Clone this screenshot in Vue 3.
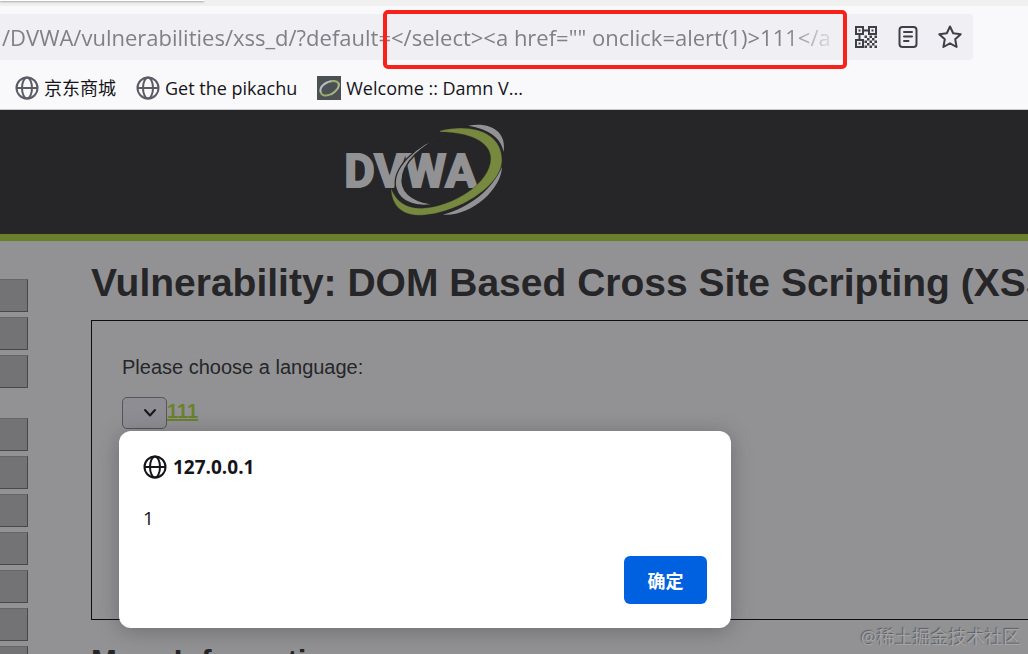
<template>
  <div class="window">
    <div class="tabs"><div class="tab"></div></div>

    <!-- address bar -->
    <div class="toolbar">
      <div class="urlbar">
        <input class="url" type="text" aria-label="Address" v-model="url" spellcheck="false">
        <button class="tool" type="button" aria-label="QR code">
          <svg width="22" height="22" viewBox="0 0 22 22" fill="#3f3f47">
            <path fill-rule="evenodd" d="M0 0h9v9H0zM2 2v5h5V2zM13 0h9v9h-9zM15 2v5h5V2zM0 13h9v9H0zM2 15v5h5v-5z" />
            <path d="M3.500 3.500h2v2h-2zM16.500 3.500h2v2h-2zM3.500 16.500h2v2h-2zM9 3.500h4v2H9zM3.500 9h2v4h-2z" />
            <path d="M9.500 9.500h2.500v2.500h-2.500zM14.500 9.500h2.500v2.500h-2.500zM19.500 9.500h2.500v2.500h-2.500zM12 12h2.500v2.500h-2.500zM17 12h2.500v2.500h-2.500zM9.500 14.500h2.500v2.500h-2.500zM14.500 14.500h2.500v2.500h-2.500zM19.500 14.500h2.500v2.500h-2.500zM12 17h2.500v2.500h-2.500zM17 17h2.500v2.500h-2.500zM9.500 19.500h2.500v2.500h-2.500zM14.500 19.500h2.500v2.500h-2.500zM19.500 19.500h2.500v2.500h-2.500z" />
          </svg>
        </button>
        <button class="tool" type="button" aria-label="Reader view">
          <svg width="22" height="22" viewBox="0 0 22 22" fill="none" stroke="#3f3f47" stroke-width="2" stroke-linecap="round">
            <rect x="2.500" y="1" width="17" height="20" rx="3" />
            <path d="M7 6H15M7 10.500H15M7 15H11.500" />
          </svg>
        </button>
        <button class="tool" type="button" aria-label="Bookmark this page">
          <svg width="24" height="24" viewBox="0 0 24 24" fill="none" stroke="#3f3f47" stroke-width="2" stroke-linejoin="round">
            <path d="M12 1.500L15.200 8.300L22.700 9.200L17.200 14.300L18.600 22L12 18.300L5.400 22L6.800 14.300L1.300 9.200L8.800 8.300Z" />
          </svg>
        </button>
      </div>
      <div class="marker"></div>
    </div>

    <nav class="bookmarks">
      <a v-for="item in bookmarks" :key="item.name" class="bookmark" href="#">
        <svg v-if="item.globe" width="24" height="24" viewBox="0 0 24 24" fill="none" stroke="#5b5b66" stroke-width="2">
          <circle cx="12" cy="12" r="10.500" />
          <ellipse cx="12" cy="12" rx="5" ry="10.500" />
          <path d="M1.500 12H22.500" />
        </svg>
        <svg v-else width="24" height="24" viewBox="0 0 24 24" fill="none">
          <rect width="24" height="24" fill="#4b5054" />
          <path d="M4 17C1 11 10 4 18 5" stroke="#b9bcbe" stroke-width="2" />
          <path d="M14 5C25 4 23 12 16 17C10 21 4 20 4 16" stroke="#9aab6d" stroke-width="2" />
          <path d="M22 7C23 12 19 16 14 19" stroke="#b9bcbe" />
        </svg>
        <span>{{ item.name }}</span>
      </a>
    </nav>

    <!-- dimmed page -->
    <div class="page">
      <header class="header">
        <svg class="logo" width="190" height="124" viewBox="0 0 570 372" role="img" aria-label="DVWA">
          <text x="43" y="230" class="logo-text">DVWA</text>
          <path d="M352 73C250 105 186 178 197 232C210 284 270 292 318 282C262 280 218 255 216 214C216 158 274 105 352 73Z" fill="#929295" stroke="#262628" stroke-width="4" />
          <path d="M330 62C430 38 516 70 516 150C516 232 370 316 265 316C205 314 184 276 183 234C198 274 225 294 275 295C370 290 482 220 482 145C482 92 410 66 330 66Z" fill="#77893f" stroke="#262628" stroke-width="1" />
          <path d="M415 47C486 35 530 68 521 126C513 82 476 58 415 47Z" fill="#929295" />
          <path d="M516 170C514 240 420 321 338 314C420 292 490 235 516 170Z" fill="#929295" />
        </svg>
      </header>

      <div class="content">
        <ul class="menu">
          <li v-for="n in 10" :key="n" :class="{ last: n === 3 }"></li>
        </ul>
        <main class="main">
          <h1>Vulnerability: DOM Based Cross Site Scripting (XSS)</h1>
          <div class="box">
            <form @submit.prevent>
              <label for="language">Please choose a language:</label>
              <div class="choice">
                <span class="picker">
                  <select id="language" name="default"><option></option></select>
                  <svg width="14" height="10" viewBox="0 0 14 10" fill="none" stroke="#17171c" stroke-width="2" stroke-linecap="round" stroke-linejoin="round">
                    <path d="M2 2L7 7.500L12 2" />
                  </svg>
                </span>
                <a href="" @click.prevent="showAlert = true">111</a>
              </div>
            </form>
          </div>
          <h2>More Information</h2>
        </main>
      </div>

      <div v-if="showAlert" class="alert" role="alertdialog" aria-labelledby="host">
        <div class="host">
          <svg width="24" height="24" viewBox="0 0 24 24" fill="none" stroke="#15141a" stroke-width="2">
            <circle cx="12" cy="12" r="10.500" />
            <ellipse cx="12" cy="12" rx="5" ry="10.500" />
            <path d="M1.500 12H22.500" />
          </svg>
          <strong id="host">127.0.0.1</strong>
        </div>
        <p>1</p>
        <button type="button" @click="showAlert = false">确定</button>
      </div>
    </div>

    <div class="watermark">@稀土掘金技术社区</div>
  </div>
</template>

<script setup>
import { ref } from 'vue'

const url = ref('/DVWA/vulnerabilities/xss_d/?default=</select><a href="" onclick=alert(1)>111</a>')
const showAlert = ref(true)

const bookmarks = [
  { name: '京东商城', globe: true },
  { name: 'Get the pikachu', globe: true },
  { name: 'Welcome :: Damn V...', globe: false }
]
</script>

<style>
body {
  margin: 0;
}
</style>

<style scoped>
.window {
  position: relative;
  display: flex;
  flex-direction: column;
  height: 100vh;
  overflow: hidden;
  background: #f9f9fb;
  font-family: "Open Sans", "Noto Sans CJK SC", sans-serif;
}

.tabs {
  height: 6px;
  background: #f0f0f1;
}

.tab {
  width: 204px;
  height: 1px;
  background: #fff;
  border-radius: 0 0 4px 0;
  box-shadow: 0 1px 2px #8c8c8c;
}

.toolbar {
  position: relative;
  padding: 8px 55px 0 0;
}

.urlbar {
  display: flex;
  align-items: center;
  height: 46px;
  padding-right: 2px;
  background: #f0f0f4;
  border-radius: 0 4px 4px 0;
}

.url {
  flex: 0 1 845px;
  min-width: 0;
  box-sizing: border-box;
  height: 46px;
  padding: 0 14px 0 2px;
  border: 0;
  outline: 0;
  background: none;
  color: #808086;
  font-family: inherit;
  font-size: 22px;
  -webkit-mask-image: linear-gradient(to right, #000 calc(100% - 60px), transparent calc(100% - 5px));
  mask-image: linear-gradient(to right, #000 calc(100% - 60px), transparent calc(100% - 5px));
}

.tool {
  display: flex;
  flex: 1 0 42px;
  align-items: center;
  justify-content: center;
  height: 42px;
  padding: 0;
  border: 0;
  background: none;
}

/* red frame drawn over the payload */
.marker {
  position: absolute;
  left: 383px;
  top: 4px;
  box-sizing: border-box;
  width: 464px;
  height: 59px;
  border: 4px solid #f8221a;
  border-radius: 5px;
  pointer-events: none;
}

.bookmarks {
  display: flex;
  gap: 20px;
  align-items: center;
  box-sizing: border-box;
  height: 50px;
  padding: 6px 15px 0;
  border-bottom: 1px solid #c8c8cc;
}

.bookmark {
  display: flex;
  gap: 5px;
  align-items: center;
  color: #15141a;
  font-size: 18px;
  line-height: 28px;
  text-decoration: none;
  white-space: nowrap;
}

.page {
  position: relative;
  flex: 1;
  min-height: 0;
  background: #929295;
  font-family: "Liberation Sans", Arial, sans-serif;
}

.header {
  height: 124px;
  background: #262628;
  border-bottom: 7px solid #6b802d;
}

.logo {
  display: block;
  margin-left: 330px;
}

.logo-text {
  fill: #929295;
  stroke: #929295;
  stroke-width: 6px;
  font-family: Roboto, sans-serif;
  font-size: 141px;
  font-weight: bold;
}

.content {
  display: flex;
  gap: 63px;
}

.menu {
  flex: none;
  width: 28px;
  margin: 38px 0 0;
  padding: 0;
  list-style: none;
}

.menu li {
  box-sizing: border-box;
  height: 33px;
  margin-bottom: 5px;
  background: #737375;
  border-top: 1px solid #666668;
  border-right: 1px solid #48484a;
  border-bottom: 1px solid #48484a;
}

.menu li.last {
  margin-bottom: 30px;
}

.main {
  flex: 1;
  min-width: 0;
  color: #262628;
}

h1 {
  margin: 19px 0 15px;
  font-size: 39px;
  line-height: 45px;
  white-space: nowrap;
}

.box {
  box-sizing: border-box;
  height: 300px;
  padding: 32px 30px;
  border: 1px solid #0d0d0e;
  border-right: 0;
}

label {
  display: block;
  font-size: 20px;
  line-height: 28px;
}

.choice {
  display: flex;
  align-items: flex-start;
  margin-top: 16px;
}

.picker {
  position: relative;
  width: 45px;
  height: 32px;
}

select {
  appearance: none;
  box-sizing: border-box;
  width: 100%;
  height: 100%;
  border: 1px solid #55555a;
  border-radius: 5px;
  background: #8d8d93;
}

.picker svg {
  position: absolute;
  right: 10px;
  top: 11px;
  pointer-events: none;
}

.choice a {
  color: #6b802d;
  font-size: 20px;
  font-weight: bold;
  line-height: 28px;
}

h2 {
  margin: 24px 0 0;
  font-size: 31px;
  line-height: 36px;
}

.alert {
  position: absolute;
  left: 119px;
  top: 321px;
  display: flex;
  flex-direction: column;
  box-sizing: border-box;
  width: 612px;
  max-width: calc(100% - 119px);
  padding: 23px 24px 24px;
  background: #fff;
  border-radius: 12px;
  box-shadow: 0 3px 22px rgba(0, 0, 0, 0.25);
  color: #15141a;
  font-family: "Open Sans", "Noto Sans CJK SC", sans-serif;
  font-size: 19px;
  line-height: 26px;
}

.host {
  display: flex;
  gap: 6px;
  align-items: center;
}

.alert p {
  margin: 25px 0;
}

.alert button {
  align-self: flex-end;
  width: 83px;
  height: 48px;
  border: 0;
  border-radius: 6px;
  background: #0061e0;
  color: #fff;
  font-family: inherit;
  font-size: 18px;
  font-weight: bold;
}

.watermark {
  position: absolute;
  right: 7px;
  bottom: 4px;
  color: #a3a3a5;
  font-size: 18px;
  line-height: 26px;
  text-shadow: -1px -1px 1px #5c5c5e;
}
</style>
